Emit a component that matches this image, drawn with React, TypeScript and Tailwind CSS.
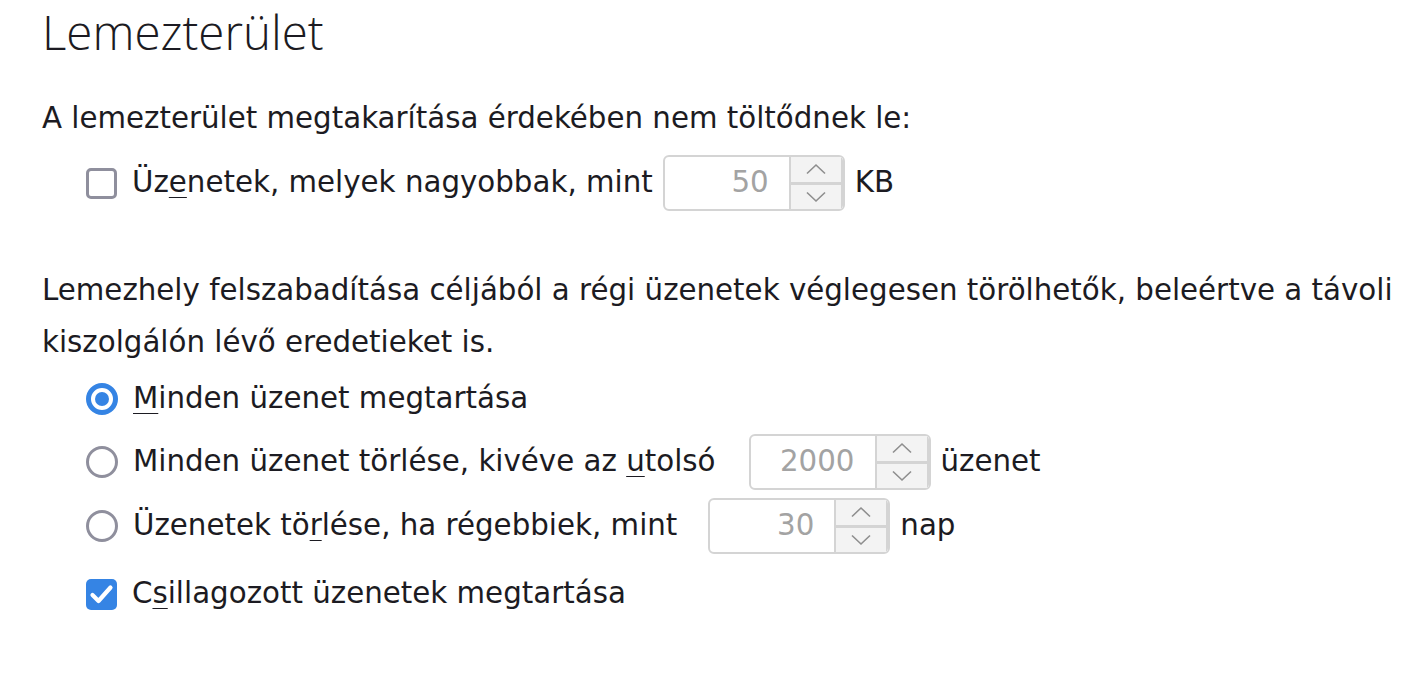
import React from "react";

const body = { fontFamily: '"DejaVu Sans", Verdana, sans-serif' };

function Spin({ value, className = "" }: { value: string; className?: string }) {
  return (
    <div
      className={`flex h-[56px] w-[182px] shrink-0 overflow-hidden rounded-[6px] border-2 border-[#d4d4d4] bg-white ${className}`}
    >
      <div className="flex flex-1 items-center justify-end pr-[20px] text-[29.3px] text-[#a3a3a3]">
        {value}
      </div>
      <div className="flex w-[52px] flex-col border-l-2 border-[#d4d4d4] bg-[#f3f3f3]">
        <div className="flex flex-1 items-center justify-center">
          <svg width="22" height="12" viewBox="0 0 22 12" fill="none">
            <path d="M2 10.5 L11 2 L20 10.5" stroke="#8e8e8e" strokeWidth="1.6" />
          </svg>
        </div>
        <div className="h-[3px] bg-[#d4d4d4]" />
        <div className="flex flex-1 items-center justify-center">
          <svg width="22" height="12" viewBox="0 0 22 12" fill="none">
            <path d="M2 1.5 L11 10 L20 1.5" stroke="#8e8e8e" strokeWidth="1.6" />
          </svg>
        </div>
      </div>
      <div className="w-[2px] border-l-2 border-[#d4d4d4] bg-white" />
    </div>
  );
}

function Box({ checked }: { checked?: boolean }) {
  return checked ? (
    <div className="flex h-[31px] w-[31px] shrink-0 items-center justify-center rounded-[5px] bg-[#3584e4]">
      <svg width="25" height="21" viewBox="0 0 25 21" fill="none">
        <path d="M3.5 11 L9.5 17 L21.5 3.5" stroke="white" strokeWidth="4.2" strokeLinecap="round" strokeLinejoin="round" />
      </svg>
    </div>
  ) : (
    <div className="h-[31px] w-[31px] shrink-0 rounded-[5px] border-[3px] border-[#8f8f9d] bg-white" />
  );
}

function Radio({ checked }: { checked?: boolean }) {
  return checked ? (
    <div className="flex h-[32px] w-[32px] shrink-0 items-center justify-center rounded-full border-[5px] border-[#3584e4] bg-white">
      <div className="h-[14px] w-[14px] rounded-full bg-[#3584e4]" />
    </div>
  ) : (
    <div className="h-[32px] w-[32px] shrink-0 rounded-full border-[3px] border-[#8f8f9d] bg-white" />
  );
}

const U = ({ children }: { children: React.ReactNode }) => (
  <span className="underline decoration-1 underline-offset-[5px]">{children}</span>
);

export default function App() {
  return (
    <div className="h-[679px] w-[1423px] overflow-hidden bg-white pl-[42px] text-[#1c1b22]" style={body}>
      <h1
        className="h-[92px] text-[47.5px] font-light leading-[64px]"
        style={{ fontFamily: '"Open Sans", sans-serif' }}
      >
        Lemezterület
      </h1>
      <p className="text-[29.3px] leading-[52px]">
        A lemezterület megtakarítása érdekében nem töltődnek le:
      </p>
      <div className="mt-[11px] flex h-[56px] items-center pl-[44px] text-[29.3px]">
        <Box />
        <span className="ml-[15px] mr-[10px]">
          Üz<U>e</U>netek, melyek nagyobbak, mint
        </span>
        <Spin value="50" />
        <span className="ml-[10px]">KB</span>
      </div>
      <p className="mt-[53px] w-[1381px] text-[29.3px] leading-[52px]">
        Lemezhely felszabadítása céljából a régi üzenetek véglegesen törölhetők, beleértve a távoli
        kiszolgálón lévő eredetieket is.
      </p>
      <div className="flex flex-col pl-[44px] text-[29.3px]">
        <div className="mt-[3px] flex h-[56px] items-center">
          <Radio checked />
          <span className="ml-[15px]">
            <U>M</U>inden üzenet megtartása
          </span>
        </div>
        <div className="mt-[7px] flex h-[56px] items-center">
          <Radio />
          <span className="ml-[15px] mr-[33px]">
            Minden üzenet törlése, kivéve az <U>u</U>tolsó
          </span>
          <Spin value="2000" />
          <span className="ml-[10px]">üzenet</span>
        </div>
        <div className="mt-[8px] flex h-[56px] items-center">
          <Radio />
          <span className="ml-[15px] mr-[31px]">
            Üzenetek tö<U>r</U>lése, ha régebbiek, mint
          </span>
          <Spin value="30" />
          <span className="ml-[10px]">nap</span>
        </div>
        <div className="mt-[12px] flex h-[56px] items-center">
          <Box checked />
          <span className="ml-[15px]">
            C<U>s</U>illagozott üzenetek megtartása
          </span>
        </div>
      </div>
    </div>
  );
}
